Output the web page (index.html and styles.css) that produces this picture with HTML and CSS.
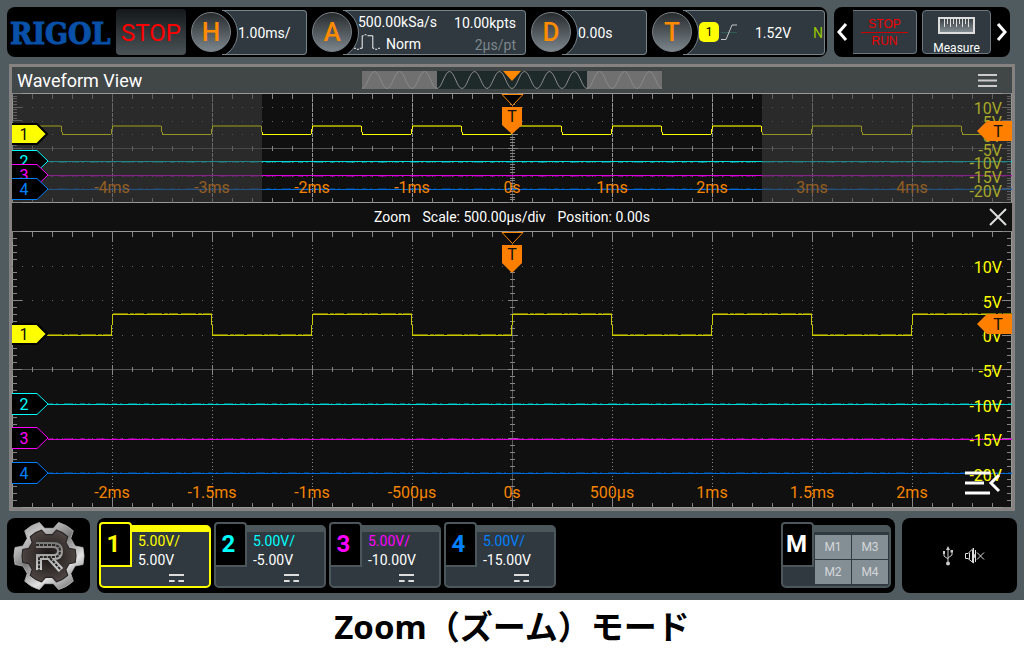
FILE: index.html
```html
<!DOCTYPE html>
<html lang="ja">
<head>
<meta charset="utf-8">
<meta name="viewport" content="width=device-width, initial-scale=1">
<title>Zoom（ズーム）モード</title>
<link rel="stylesheet" href="styles.css">
</head>
<body>
<main class="scope">
  <header class="topbar">
    <div class="topbar-main">
      <div class="brand">RIGOL</div>
      <button class="run-state">STOP</button>
      <div class="param">
        <button class="knob">H</button>
        <div class="param-box"><span>1.00ms/</span></div>
      </div>
      <div class="param param-acquire">
        <button class="knob">A</button>
        <div class="param-box acquire">
          <span>500.00kSa/s</span><span class="end">10.00kpts</span>
          <span class="mode"><svg class="pulse-icon" viewBox="0 0 28 17"><path d="M0 14.500H2M3 15.500H5M6 14.500H8.500V1.500H10M11 .5H13M14 1.500H19.500V14.500H21M22 15.500H24M25 14.500H27" /></svg>Norm</span><span class="end faint">2µs/pt</span>
        </div>
      </div>
      <div class="param">
        <button class="knob">D</button>
        <div class="param-box"><span>0.00s</span></div>
      </div>
      <div class="param param-trigger">
        <button class="knob">T</button>
        <div class="param-box trigger">
          <span class="source">1</span>
          <svg class="slope-icon" viewBox="0 0 17 17"><path class="slope-level" d="M0 8.500H16" /><path class="slope-edge" d="M0 15.500H5L11 1H16" /></svg>
          <span class="level">1.52V</span>
          <span class="sweep">N</span>
        </div>
      </div>
    </div>
    <nav class="shortcuts" aria-label="Shortcuts">
      <button class="arrow" aria-label="Previous"><svg viewBox="0 0 12 20"><path d="M10 2L3 10L10 18" /></svg></button>
      <button class="shortcut stop-run"><span class="stop-text">STOP</span><span>RUN</span></button>
      <button class="shortcut measure">
        <svg class="ruler-icon" viewBox="0 0 38 18">
          <defs><linearGradient id="ruler" x2="0" y2="1"><stop offset="0" stop-color="#343c40" /><stop offset="1" stop-color="#899298" /></linearGradient></defs>
          <rect x="1" y="1" width="35" height="15" fill="url(#ruler)" stroke="#ddd" stroke-width="2" />
          <path d="M6.500 2V10M9.500 2V7M12.500 2V10M15.500 2V7M18.500 2V10M21.500 2V7M24.500 2V10M27.500 2V7M30.500 2V10" stroke="#ddd" />
        </svg>
        Measure
      </button>
      <button class="arrow next" aria-label="Next"><svg viewBox="0 0 12 20"><path d="M2 2L9 10L2 18" /></svg></button>
    </nav>
  </header>

  <section class="view">
    <header class="view-head">
      <h1 class="view-title">Waveform View</h1>
      <svg class="minimap" viewBox="0 0 300 18">
        <defs><pattern id="sine" width="25" height="18" patternUnits="userSpaceOnUse"><path d="M0 17.500C5 17.500 7.500 .5 12.500 .5S20 17.500 25 17.500" fill="none" stroke="#898989" /></pattern></defs>
        <rect width="300" height="18" fill="#707070" />
        <rect x="75" width="150" height="18" fill="#1e292a" />
        <rect width="300" height="18" fill="url(#sine)" />
        <path d="M141 0H159L150 10Z" fill="#ff8800" />
      </svg>
      <button class="icon-button" aria-label="View menu"><svg class="menu-icon" viewBox="0 0 20 14"><path d="M0 2H19M0 7.500H19M0 13H19" /></svg></button>
    </header>

    <svg class="plot" viewBox="0 0 1000 110">
      <rect width="1000" height="110" fill="#101010" />
      <g class="grid">
        <path class="frame-line" d="M0 .5H1000M0 109.500H1000M.5 0V110M999.500 0V110" />
        <path class="axis" d="M0 55.500H1000M500.500 0V110" />
        <path class="dots" d="M0 14.500H1000M0 28.500H1000M0 41.500H1000M0 69.500H1000M0 83.500H1000M0 96.500H1000" />
        <path class="dash-column" d="M100.500 0V110M200.500 0V110M300.500 0V110M400.500 0V110M600.500 0V110M700.500 0V110M800.500 0V110M900.500 0V110" />
        <path class="ticks-x" d="M0 3H1000M0 107H1000M0 55.500H1000" />
        <path class="ticks-fine" d="M2.500 0V110M997.500 0V110M500.500 0V110" />
        <path class="ticks-div" d="M5 0V110M995 0V110M500.500 0V110" stroke-dasharray="1 12.630" />
      </g>
      <path class="trace trace-1 high" d="M20 33H49M100 33H149M200 33H249M300 33H349M400 33H449M500 33H549M600 33H649M700 33H749M800 33H849M900 33H949" />
      <path class="trace trace-1" d="M49 33L50.500 41.500H99L100.500 33M149 33L150.500 41.500H199L200.500 33M249 33L250.500 41.500H299L300.500 33M349 33L350.500 41.500H399L400.500 33M449 33L450.500 41.500H499L500.500 33M549 33L550.500 41.500H599L600.500 33M649 33L650.500 41.500H699L700.500 33M749 33L750.500 41.500H799L800.500 33M849 33L850.500 41.500H899L900.500 33M949 33L950.500 41.500H1000" />
      <g class="trace">
        <path class="trace-2" d="M30 68.500H1000" /><path class="trace-2 noise" d="M30 69.500H1000" />
        <path class="trace-3" d="M30 82.500H1000" /><path class="trace-3 noise" d="M30 83.500H1000" />
        <path class="trace-4" d="M30 96.500H1000" /><path class="trace-4 noise" d="M30 95.500H1000" />
      </g>
      <g class="time-labels">
        <text x="100" y="100">-4ms</text><text x="200" y="100">-3ms</text><text x="300" y="100">-2ms</text><text x="400" y="100">-1ms</text><text x="500" y="100">0s</text><text x="600" y="100">1ms</text><text x="700" y="100">2ms</text><text x="800" y="100">3ms</text><text x="900" y="100">4ms</text>
      </g>
      <path class="outside-zoom" d="M1 1H250V109H1ZM750 1H999V109H750Z" />
      <g class="volt-labels shaded">
        <text x="990" y="21">10V</text><text x="990" y="35">5V</text><text x="990" y="49">0V</text><text x="990" y="63">-5V</text><text x="990" y="76">-10V</text><text x="990" y="90">-15V</text><text x="990" y="104">-20V</text>
      </g>
      <g class="markers">
        <path class="flag flag-1" d="M0 31H25L35 41L25 51H0" /><text class="dark" x="12" y="47">1</text>
        <path class="flag flag-2" d="M0 57.500H25L36 68L25 78.500H0" /><text class="ink-2" x="12" y="74">2</text>
        <path class="flag flag-3" d="M0 71.500H25L36 82L25 92.500H0" /><text class="ink-3" x="12" y="88">3</text>
        <path class="flag flag-4" d="M0 85.500H25L36 96L25 106.500H0" /><text class="ink-4" x="12" y="102">4</text>
        <path class="trigger-origin" d="M490 1.500H511L500.500 12.500Z" />
        <path class="trigger-flag" d="M490 14H510V32L500 41L490 32Z" /><text class="dark" x="500" y="29">T</text>
        <path class="trigger-flag" d="M1000 28H975L965 38L975 48H1000Z" /><text class="dark" x="986" y="44">T</text>
      </g>
    </svg>

    <div class="zoom-bar">
      <span>Zoom</span><span>Scale: 500.00µs/div</span><span>Position: 0.00s</span>
      <button class="close" aria-label="Close zoom"><svg viewBox="0 0 18 18"><path d="M1 1L17 17M17 1L1 17" /></svg></button>
    </div>

    <div class="zoom-plot">
      <svg class="plot" viewBox="0 0 1000 277">
        <rect width="1000" height="277" fill="#101010" />
        <g class="grid">
          <path class="frame-line" d="M0 .5H1000M0 276.500H1000M.5 0V277M999.500 0V277" />
          <path class="axis" d="M0 138.500H1000M500.500 0V277" />
          <path class="dots" d="M0 35.500H1000M0 69.500H1000M0 104.500H1000M0 173.500H1000M0 207.500H1000M0 242.500H1000" />
          <path class="dot-column" d="M100.500 0V277M200.500 0V277M300.500 0V277M400.500 0V277M600.500 0V277M700.500 0V277M800.500 0V277M900.500 0V277" />
          <path class="ticks-x" d="M0 3H1000M0 274H1000M0 138.500H1000" />
          <path class="ticks-major" d="M0 5.500H1000M0 271.500H1000M0 138.500H1000" />
          <path class="ticks-y" d="M2.500 0V277M997.500 0V277M500.500 0V277" />
          <path class="ticks-div" d="M5 0V277M995 0V277M500.500 0V277" stroke-dasharray="1 33.500" />
        </g>
        <path class="trace trace-1 soft" d="M35 103.500H99M101 82.500H200M201 103.500H299M301 82.500H400M401 103.500H499M501 82.500H600M601 103.500H699M701 82.500H800M801 103.500H899M901 82.500H1000" />
        <path class="trace trace-1 main" d="M35 104.500H99.500L100.500 83.500H199.500L200.500 104.500H299.500L300.500 83.500H399.500L400.500 104.500H499.500L500.500 83.500H599.500L600.500 104.500H699.500L700.500 83.500H799.500L800.500 104.500H899.500L900.500 83.500H1000" />
        <g class="trace">
          <path class="trace-2" d="M36 173.500H1000" /><path class="trace-2 noise" d="M36 172.500H1000" />
          <path class="trace-3" d="M36 208.500H1000" /><path class="trace-3 noise" d="M36 207.500H1000" />
          <path class="trace-4" d="M36 242.500H1000" /><path class="trace-4 noise" d="M36 241.500H1000" />
        </g>
        <g class="time-labels">
          <text x="100" y="267">-2ms</text><text x="200" y="267">-1.5ms</text><text x="300" y="267">-1ms</text><text x="400" y="267">-500µs</text><text x="500" y="267">0s</text><text x="600" y="267">500µs</text><text x="700" y="267">1ms</text><text x="800" y="267">1.5ms</text><text x="900" y="267">2ms</text>
        </g>
        <g class="volt-labels">
          <text x="990" y="42">10V</text><text x="990" y="77">5V</text><text x="990" y="111">0V</text><text x="990" y="146">-5V</text><text x="990" y="181">-10V</text><text x="990" y="215">-15V</text><text x="990" y="250">-20V</text>
        </g>
        <g class="markers">
          <path class="flag flag-1" d="M0 93H25L35 103L25 113H0" /><text class="dark" x="12" y="109">1</text>
          <path class="flag flag-2" d="M0 162.500H25L36 173L25 183.500H0" /><text class="ink-2" x="12" y="179">2</text>
          <path class="flag flag-3" d="M0 196.500H25L36 207L25 217.500H0" /><text class="ink-3" x="12" y="213">3</text>
          <path class="flag flag-4" d="M0 231.500H25L36 242L25 252.500H0" /><text class="ink-4" x="12" y="248">4</text>
          <path class="trigger-origin" d="M490 1.500H511L500.500 12.500Z" />
          <path class="trigger-flag" d="M490 14H510V32L500 42L490 32Z" /><text class="dark" x="500" y="29">T</text>
          <path class="trigger-flag" d="M1000 83H975L965 93L975 103H1000Z" /><text class="dark" x="986" y="99">T</text>
        </g>
      </svg>
      <button class="drawer" aria-label="Open side menu"><svg viewBox="0 0 36 26"><path d="M0 3H25M0 13H19M0 23H25M34 5L26 13L34 21" /></svg></button>
    </div>
  </section>

  <footer class="bottombar">
    <button class="home" aria-label="Home">
      <svg viewBox="-36 -36 72 72">
        <defs>
          <linearGradient id="steel" x2=".7" y2="1"><stop offset="0" stop-color="#8d8d8d" /><stop offset=".25" stop-color="#c4c4c4" /><stop offset=".5" stop-color="#7c7c7c" /><stop offset=".78" stop-color="#e2e2e2" /><stop offset="1" stop-color="#888" /></linearGradient>
          <radialGradient id="core"><stop offset="0" stop-color="#171313" /><stop offset="1" stop-color="#4d4542" /></radialGradient>
          <linearGradient id="mark" gradientUnits="userSpaceOnUse" x1="0" y1="-14" x2="0" y2="15"><stop offset="0" stop-color="#777" /><stop offset=".5" stop-color="#aaa" /><stop offset="1" stop-color="#d0d0d0" /></linearGradient>
          <path id="gear" d="M-9.600 -33.600L-4.400 -27.700H4.400L9.600 -33.600A35 35 0 0 1 24.300 -25.200L21.800 -17.600L26.100 -10L34 -8.500A35 35 0 0 1 34 8.500L26.100 10L21.800 17.600L24.300 25.200A35 35 0 0 1 9.600 33.600L4.400 27.700H-4.400L-9.600 33.600A35 35 0 0 1 -24.300 25.200L-21.800 17.600L-26.100 10L-34 8.500A35 35 0 0 1 -34 -8.500L-26.100 -10L-21.800 -17.600L-24.300 -25.200A35 35 0 0 1 -9.600 -33.600Z" />
        </defs>
        <use href="#gear" fill="url(#steel)" stroke="#b5b5b5" stroke-width=".8" />
        <use href="#gear" transform="scale(.77)" fill="url(#core)" stroke="#292424" stroke-width="1.500" />
        <path d="M-13 -11H4Q11 -11 11 -5T5 1H-10V14M1 2L12 14" fill="none" stroke="url(#mark)" stroke-width="6" />
        <path d="M-13 -11H4Q11 -11 11 -5T5 1H-10V14M1 2L12 14" fill="none" stroke="#2a2626" stroke-width="2" stroke-dasharray="3 1" />
      </svg>
    </button>

    <div class="channels">
      <button class="channel channel-1 active"><span class="channel-tab">1</span><span class="channel-info"><span class="scale">5.00V/</span><span>5.00V</span></span><span class="coupling"></span></button>
      <button class="channel channel-2"><span class="channel-tab">2</span><span class="channel-info"><span class="scale">5.00V/</span><span>-5.00V</span></span><span class="coupling"></span></button>
      <button class="channel channel-3"><span class="channel-tab">3</span><span class="channel-info"><span class="scale">5.00V/</span><span>-10.00V</span></span><span class="coupling"></span></button>
      <button class="channel channel-4"><span class="channel-tab">4</span><span class="channel-info"><span class="scale">5.00V/</span><span>-15.00V</span></span><span class="coupling"></span></button>
      <div class="channel math">
        <span class="channel-tab">M</span>
        <div class="math-grid"><button>M1</button><button>M3</button><button>M2</button><button>M4</button></div>
      </div>
    </div>

    <div class="status">
      <svg class="usb-icon" viewBox="0 0 10 20"><path d="M5 2V17M1 6V10L5 13M9 5V9L5 12" /><path class="solid" d="M5 0L7 4H3ZM0 5H2V8H0ZM7.500 4H10V6.500H7.500Z" /><circle class="solid" cx="5" cy="17.500" r="2" /></svg>
      <svg class="sound-icon" viewBox="0 0 20 18"><path d="M.5 6.500H3L8.500 1V16L3 11.500H.5ZM4.500 6V12M7.500 3V15M10.500 3V15M8 6Q11.500 9 8 12M12 5.500L19 12.500M19 5.500L12 12.500" /></svg>
    </div>
  </footer>
</main>
<p class="caption">Zoom（ズーム）モード</p>
</body>
</html>
```
FILE: styles.css
```css
* { box-sizing: border-box; }

body {
  margin: 0;
  background: #fff;
  color: #fff;
  font-family: Roboto, "Noto Sans CJK JP", sans-serif;
  font-size: 14px;
}

button {
  margin: 0;
  padding: 0;
  border: 0;
  background: none;
  color: inherit;
  font: inherit;
}

svg { display: block; fill: none; }

.scope { padding: 7px; background: #4f5b5f; }

/* Top bar */
.topbar { display: flex; gap: 7px; margin-right: 7px; }

.topbar-main {
  display: flex;
  flex: 1;
  gap: 5px;
  height: 50px;
  padding: 2px 2px 2px 3px;
  border-radius: 8px;
  background: #000;
}

.brand {
  width: 101px;
  color: #0850a8;
  font: bold 30px/50px "DejaVu Serif Condensed", "DejaVu Serif", serif;
  -webkit-text-stroke: 1px #0850a8;
}

.run-state {
  width: 70px;
  padding-top: 2px;
  border-radius: 4px;
  background: linear-gradient(#14181a, #4b5357);
  color: #f00;
  font-size: 24px;
}

.param { display: flex; flex: 116; align-items: center; }
.param-acquire { flex-grow: 214; }
.param-trigger { flex-grow: 173; }

.knob {
  flex: none;
  width: 40px;
  height: 40px;
  border: 1px solid #788187;
  border-radius: 50%;
  background: linear-gradient(#272b2e, #7b858b);
  color: #ff8c00;
  font-size: 26px;
  font-weight: 500;
}

.param-box {
  position: relative;
  display: flex;
  flex: 1;
  align-items: center;
  height: 45px;
  margin-left: -9px;
  padding: 2px 9px 0 16px;
  overflow: hidden;
  border: 1px solid #75838b;
  border-left: 0;
  border-radius: 0 4px 4px 0;
  background: #2f393f;
  line-height: 20px;
}

/* Concave edge around the knob */
.param-box::before {
  content: "";
  position: absolute;
  top: -4px;
  left: -36px;
  width: 50px;
  height: 50px;
  border: 1px solid #75838b;
  border-radius: 50%;
  background: #000;
}

.param > .knob { position: relative; z-index: 1; }
.param-box > * { position: relative; }

.acquire {
  display: grid;
  grid-template-columns: auto auto;
  align-content: center;
  padding-left: 15px;
}

.end { justify-self: end; padding-top: 2px; }
.faint { color: #7d878d; }
.mode { display: flex; gap: 5px; margin-left: -4px; }
.pulse-icon { width: 27px; height: 17px; stroke: #fff; }
.param-box > span:not(.end) { line-height: 20px; }

.trigger { padding: 0 0 0 16px; }

.param-box > .source {
  width: 20px;
  border-radius: 5px;
  background: #ff0;
  color: #000;
  font-size: 12px;
  line-height: 17px;
  text-align: center;
}

.slope-icon { width: 17px; height: 17px; margin-left: 2px; }
.slope-edge { stroke: #c8c8c8; }
.slope-level { stroke: #315c55; }
.level { margin-left: 17px; padding-top: 1px; }
.sweep { margin: 0 1px 0 auto; padding-top: 1px; color: #99c400; }

.shortcuts {
  display: flex;
  align-items: center;
  gap: 5px;
  width: 176px;
  height: 50px;
  padding: 0 2px;
  border-radius: 8px;
  background: #000;
}

.arrow svg { width: 12px; height: 20px; stroke: #fff; stroke-width: 3; }
.next { margin-left: auto; }

.shortcut {
  display: flex;
  flex-direction: column;
  align-items: center;
  height: 44px;
  border: 1px solid #6c7980;
  border-radius: 4px;
  background: #2f393f;
}

.stop-run {
  justify-content: center;
  width: 65px;
  border-left: 0;
  border-radius: 0 4px 4px 0;
  color: #f00000;
  font-family: "Liberation Sans", sans-serif;
  font-size: 12px;
  line-height: 16px;
}

.stop-text { padding: 0 7px; border-bottom: 1px solid #c00; }

.measure {
  gap: 4px;
  width: 70px;
  padding-top: 6px;
  font-size: 12px;
  line-height: 18px;
}

.ruler-icon { flex: none; width: 38px; height: 18px; }

/* Waveform window */
.view { margin: 7px 2px 0; border: 3px solid #868282; background: #101010; }

.view-head {
  display: grid;
  grid-template-columns: 1fr 300px 1fr;
  align-items: center;
  height: 26px;
  background: #414647;
}

.view-title { margin: 0; padding-left: 5px; font-size: 18px; font-weight: 400; }
.minimap { width: 300px; height: 18px; }
.icon-button { justify-self: end; margin-right: 14px; }
.menu-icon { width: 20px; height: 14px; stroke: #ccc; stroke-width: 2; }

.plot { width: 100%; height: auto; }
.plot text { font-size: 16px; }
.grid { stroke: #858585; shape-rendering: crispEdges; }
.frame-line { stroke: #999; }
.axis { stroke: #555; }
.dots { stroke: #666; stroke-dasharray: 1 9; }
.dash-column { stroke: #999; stroke-dasharray: 4 1; }
.dot-column { stroke: #858585; stroke-dasharray: 1 2.45; }
.ticks-x { stroke-width: 5; stroke-dasharray: 1 19; }
.ticks-major { stroke-width: 10; stroke-dasharray: 1 99; }
.ticks-y { stroke-width: 5; stroke-dasharray: 1 5.9; }
.ticks-fine { stroke-width: 5; stroke-dasharray: 1 1.73; }
.ticks-div { stroke-width: 10; }

.trace { shape-rendering: crispEdges; }
.trace-1 { stroke: #ff0; }
.trace-1.main { stroke: #c8c800; }
.trace-1.high { stroke: #959500; stroke-width: 2; }
.trace-1.soft { stroke: #777700; stroke-dasharray: 15 2 4 1 9 3; }
.trace-2 { stroke: #00dada; }
.trace-3 { stroke: #dd00dd; }
.trace-4 { stroke: #006bd8; }
.noise { opacity: .4; stroke-dasharray: 5 3 2 6 9 2 1 4; }

.time-labels { fill: #f68400; text-anchor: middle; }
.volt-labels { fill: #ff0; text-anchor: end; }
.volt-labels.shaded { fill: #a8a828; }
.outside-zoom { fill: #404040; fill-opacity: .55; }

.markers { text-anchor: middle; }
.flag { fill: #000; }
.flag-1 { fill: #ff0; stroke: #000; stroke-width: 2; }
.flag-2 { stroke: #0ff; }
.flag-3 { stroke: #f0f; }
.flag-4 { stroke: #0080ff; }
.dark { fill: #111; }
.ink-2 { fill: #0ff; }
.ink-3 { fill: #f0f; }
.ink-4 { fill: #0080ff; }
.trigger-origin { fill: #000; stroke: #ff8800; }
.trigger-flag { fill: #ff8000; }

.zoom-bar {
  position: relative;
  display: flex;
  align-items: center;
  justify-content: center;
  gap: 12px;
  height: 28px;
}

.close { position: absolute; right: 5px; }
.close svg { width: 18px; height: 18px; stroke: #ddd; stroke-width: 2; }

.zoom-plot { position: relative; }
.drawer { position: absolute; right: 11px; bottom: 12px; }
.drawer svg { width: 36px; height: 26px; stroke: #fff; stroke-width: 3; }

/* Bottom bar */
.bottombar { display: flex; gap: 7px; height: 75px; margin-top: 7px; }

.home, .channels, .status { border-radius: 8px; background: #000; }
.home { width: 83px; }
.home svg { width: 72px; height: 72px; margin: 0 auto; }

.channels { display: flex; flex: 1; gap: 3px; padding: 4px 4px 5px 2px; }

.channel {
  --edge: #4c575c;
  position: relative;
  width: 112px;
  margin-top: 3px;
  border: 2px solid var(--edge);
  border-top-width: 7px;
  border-radius: 5px;
  background: #2f393f;
  text-align: left;
}

.channel-1 { --ink: #ff0; }
.channel-2 { --ink: #0ff; }
.channel-3 { --ink: #f0f; }
.channel-4 { --ink: #0080ff; }
.channel.active { --edge: #ff0; }

.channel-tab {
  position: absolute;
  top: -10px;
  left: -2px;
  width: 33px;
  height: 45px;
  border: 2px solid var(--edge);
  border-radius: 4px 4px 0 0;
  background: #000;
  color: var(--ink);
  font-size: 24px;
  font-weight: 700;
  line-height: 41px;
  text-align: center;
}

.channel-1 .channel-tab,
.channel-2 .channel-tab,
.channel-3 .channel-tab,
.channel-4 .channel-tab { padding-right: 4px; }

.channel-info {
  display: flex;
  flex-direction: column;
  padding: 0 0 18px 37px;
  line-height: 19px;
}

.scale { color: var(--ink); }

.coupling {
  position: absolute;
  right: 25px;
  bottom: 4px;
  width: 15px;
  height: 8px;
  border-top: 2px solid #ddd;
  border-bottom: 2px dashed #ddd;
}

.math { width: 110px; margin-left: auto; }
.math .channel-tab { padding-right: 2px; }

.math-grid {
  display: grid;
  grid-template-columns: 1fr 1fr;
  grid-auto-rows: 24px;
  gap: 1px;
  margin: 3px 1px 0 32px;
}

.math-grid button { background: #848e95; color: #d3d7d9; font-size: 12px; }

.status {
  display: flex;
  align-items: center;
  justify-content: center;
  gap: 12px;
  width: 115px;
  padding-left: 8px;
}

.usb-icon { width: 10px; height: 20px; stroke: #ccc; }
.solid { fill: #ccc; stroke: none; }
.sound-icon { width: 20px; height: 18px; stroke: #ddd; }

.caption {
  margin: 0;
  color: #000;
  font: bold 33px/54px "Noto Sans", "Noto Sans CJK JP", sans-serif;
  text-align: center;
}
```
